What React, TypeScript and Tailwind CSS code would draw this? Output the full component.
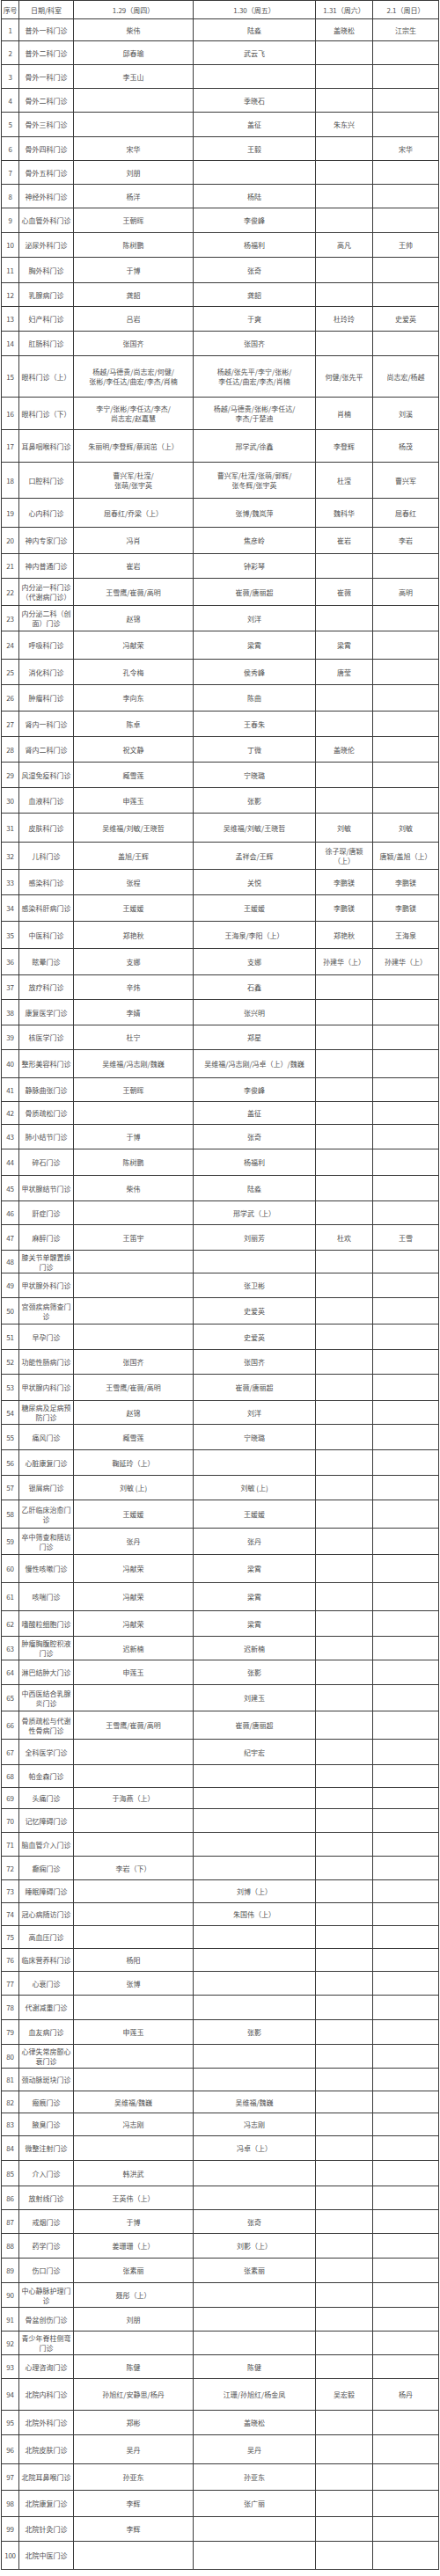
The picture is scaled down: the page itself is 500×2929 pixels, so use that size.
import React from "react";

type Row = [number, string, string, string, string, string, number];

const H: Record<number, string> = {
  22: "h-[22px]",
  24: "h-[24px]",
  25: "h-[25px]",
  26: "h-[26px]",
  27: "h-[27px]",
  28: "h-[28px]",
  29: "h-[29px]",
  30: "h-[30px]",
  31: "h-[31px]",
  32: "h-[32px]",
  33: "h-[33px]",
  36: "h-[36px]",
  37: "h-[37px]",
  41: "h-[41px]",
  47: "h-[47px]",
};

const rows: Row[] = [
  [1, "普外一科门诊", "柴伟", "陆淼", "盖晓松", "江宗生", 25],
  [2, "普外二科门诊", "邱春瑜", "武云飞", "", "", 27],
  [3, "骨外一科门诊", "李玉山", "", "", "", 27],
  [4, "骨外二科门诊", "", "季晓石", "", "", 27],
  [5, "骨外三科门诊", "", "盖征", "朱东兴", "", 28],
  [6, "骨外四科门诊", "宋华", "王毅", "", "宋华", 27],
  [7, "骨外五科门诊", "刘朋", "", "", "", 27],
  [8, "神经外科门诊", "杨洋", "杨陆", "", "", 27],
  [9, "心血管外科门诊", "王朝晖", "李俊峰", "", "", 28],
  [10, "泌尿外科门诊", "陈树鹏", "杨福利", "高凡", "王帅", 28],
  [11, "胸外科门诊", "于博", "张奇", "", "", 29],
  [12, "乳腺病门诊", "龚韶", "龚韶", "", "", 27],
  [13, "妇产科门诊", "吕岩", "于爽", "杜玲玲", "史爱英", 28],
  [14, "肛肠科门诊", "张国齐", "张国齐", "", "", 28],
  [15, "眼科门诊（上）", "杨越/马德贵/尚志宏/何健/\n张彬/李任达/曲宏/李杰/肖楠", "杨越/张先平/李宁/张彬/\n李任达/曲宏/李杰/肖楠", "何健/张先平", "尚志宏/杨越", 47],
  [16, "眼科门诊（下）", "李宁/张彬/李任达/李杰/\n尚志宏/赵嘉慧", "杨越/马德贵/张彬/李任达/\n李杰/于楚迪", "肖楠", "刘溪", 37],
  [17, "耳鼻咽喉科门诊", "朱丽明/李登辉/蔡润茁（上）", "邢学武/徐鑫", "李登辉", "杨茂", 37],
  [18, "口腔科门诊", "曹兴军/杜滢/\n张萌/张宇英", "曹兴军/杜滢/张萌/郭辉/\n张冬辉/张宇英", "杜滢", "曹兴军", 41],
  [19, "心内科门诊", "屈春红/乔梁（上）", "张博/魏岚萍", "魏科华", "屈春红", 33],
  [20, "神内专家门诊", "冯肖", "焦彦岭", "崔岩", "李岩", 30],
  [21, "神内普通门诊", "崔岩", "钟彩琴", "", "", 28],
  [22, "内分泌一科门诊\n（代谢病门诊）", "王雪鹰/崔薇/高明", "崔薇/唐丽超", "崔薇", "高明", 31],
  [23, "内分泌二科（创\n面）门诊", "赵锦", "刘洋", "", "", 29],
  [24, "呼吸科门诊", "冯献荣", "梁霄", "梁霄", "", 32],
  [25, "消化科门诊", "孔令梅", "侯秀峰", "唐莹", "", 29],
  [26, "肿瘤科门诊", "李向东", "陈曲", "", "", 30],
  [27, "肾内一科门诊", "陈卓", "王春朱", "", "", 29],
  [28, "肾内二科门诊", "祝文静", "丁微", "盖晓伦", "", 29],
  [29, "风湿免疫科门诊", "臧雪莲", "宁晓璐", "", "", 29],
  [30, "血液科门诊", "申莲玉", "张影", "", "", 29],
  [31, "皮肤科门诊", "吴维福/刘敏/王晓哲", "吴维福/刘敏/王晓哲", "刘敏", "刘敏", 33],
  [32, "儿科门诊", "盖旭/王辉", "孟祥会/王辉", "徐子琛/唐颖\n（上）", "唐颖/盖旭（上）", 31],
  [33, "感染科门诊", "张程", "关悦", "李鹏镁", "李鹏镁", 29],
  [34, "感染科肝病门诊", "王媛媛", "王媛媛", "李鹏镁", "李鹏镁", 30],
  [35, "中医科门诊", "郑艳秋", "王海泉/李阳（上）", "郑艳秋", "王海泉", 31],
  [36, "眩晕门诊", "支娜", "支娜", "孙建华（上）", "孙建华（上）", 30],
  [37, "放疗科门诊", "辛炜", "石鑫", "", "", 28],
  [38, "康复医学门诊", "李婧", "张兴明", "", "", 29],
  [39, "核医学门诊", "杜宁", "郑星", "", "", 28],
  [40, "整形美容科门诊", "吴维福/冯志刚/魏巍", "吴维福/冯志刚/冯卓（上）/魏巍", "", "", 32],
  [41, "静脉曲张门诊", "王朝晖", "李俊峰", "", "", 27],
  [42, "骨质疏松门诊", "", "盖征", "", "", 26],
  [43, "肺小结节门诊", "于博", "张奇", "", "", 28],
  [44, "碎石门诊", "陈树鹏", "杨福利", "", "", 30],
  [45, "甲状腺结节门诊", "柴伟", "陆淼", "", "", 29],
  [46, "鼾症门诊", "", "邢学武（上）", "", "", 27],
  [47, "麻醉门诊", "王笛宇", "刘丽芳", "杜欢", "王雪", 29],
  [48, "膝关节单髁置换\n门诊", "", "", "", "", 26],
  [49, "甲状腺外科门诊", "", "张卫彬", "", "", 28],
  [50, "宫颈疾病筛查门\n诊", "", "史爱英", "", "", 30],
  [51, "早孕门诊", "", "史爱英", "", "", 29],
  [52, "功能性肠病门诊", "张国齐", "张国齐", "", "", 28],
  [53, "甲状腺内科门诊", "王雪鹰/崔薇/高明", "崔薇/唐丽超", "", "", 30],
  [54, "糖尿病及足病预\n防门诊", "赵锦", "刘洋", "", "", 27],
  [55, "痛风门诊", "臧雪莲", "宁晓璐", "", "", 29],
  [56, "心脏康复门诊", "鞠延玲（上）", "", "", "", 29],
  [57, "银屑病门诊", "刘敏 (上)", "刘敏 (上)", "", "", 28],
  [58, "乙肝临床治愈门\n诊", "王媛媛", "王媛媛", "", "", 32],
  [59, "卒中筛查和随访\n门诊", "张丹", "张丹", "", "", 30],
  [60, "慢性咳嗽门诊", "冯献荣", "梁霄", "", "", 32],
  [61, "咳喘门诊", "冯献荣", "梁霄", "", "", 32],
  [62, "嗜酸粒细胞门诊", "冯献荣", "梁霄", "", "", 29],
  [63, "肿瘤胸腹腔积液\n门诊", "迟新楠", "迟新楠", "", "", 27],
  [64, "淋巴结肿大门诊", "申莲玉", "张影", "", "", 28],
  [65, "中西医结合乳腺\n炎门诊", "", "刘建玉", "", "", 30],
  [66, "骨质疏松与代谢\n性骨病门诊", "王雪鹰/崔薇/高明", "崔薇/唐丽超", "", "", 32],
  [67, "全科医学门诊", "", "纪宇宏", "", "", 29],
  [68, "帕金森门诊", "", "", "", "", 26],
  [69, "头痛门诊", "于海燕（上）", "", "", "", 24],
  [70, "记忆障碍门诊", "", "", "", "", 27],
  [71, "脑血管介入门诊", "", "", "", "", 27],
  [72, "癫痫门诊", "李岩（下）", "", "", "", 27],
  [73, "睡眠障碍门诊", "", "刘博（上）", "", "", 26],
  [74, "冠心病随访门诊", "", "朱国伟（上）", "", "", 26],
  [75, "高血压门诊", "", "", "", "", 26],
  [76, "临床营养科门诊", "杨阳", "", "", "", 26],
  [77, "心衰门诊", "张博", "", "", "", 27],
  [78, "代谢减重门诊", "", "", "", "", 28],
  [79, "血友病门诊", "申莲玉", "张影", "", "", 28],
  [80, "心律失常房颤心\n衰门诊", "", "", "", "", 27],
  [81, "颈动脉斑块门诊", "", "", "", "", 26],
  [82, "瘢痕门诊", "吴维福/魏巍", "吴维福/魏巍", "", "", 25],
  [83, "腋臭门诊", "冯志刚", "冯志刚", "", "", 26],
  [84, "微整注射门诊", "", "冯卓（上）", "", "", 28],
  [85, "介入门诊", "韩洪武", "", "", "", 29],
  [86, "放射线门诊", "王英伟（上）", "", "", "", 27],
  [87, "戒烟门诊", "于博", "张奇", "", "", 27],
  [88, "药学门诊", "姜珊珊（上）", "刘影（上）", "", "", 28],
  [89, "伤口门诊", "张素丽", "张素丽", "", "", 28],
  [90, "中心静脉护理门\n诊", "聂彤（上）", "", "", "", 28],
  [91, "骨盆创伤门诊", "刘朋", "", "", "", 27],
  [92, "青少年脊柱侧弯\n门诊", "", "", "", "", 27],
  [93, "心理咨询门诊", "陈健", "陈健", "", "", 27],
  [94, "北院内科门诊", "孙旭红/安静思/杨丹", "江珊/孙旭红/杨金凤", "吴宏毅", "杨丹", 36],
  [95, "北院外科门诊", "郑彬", "盖晓松", "", "", 28],
  [96, "北院皮肤门诊", "吴丹", "吴丹", "", "", 33],
  [97, "北院耳鼻喉门诊", "孙亚东", "孙亚东", "", "", 30],
  [98, "北院康复门诊", "李辉", "张广丽", "", "", 30],
  [99, "北院针灸门诊", "李辉", "", "", "", 28],
  [100, "北院中医门诊", "", "", "", "", 32],
];

const cols = ["w-[20px]", "w-[62px]", "w-[136px]", "w-[139px]", "w-[65px]", "w-[75px]"];

function Cell({ text, i }: { text: string; i: number }) {
  const lines = text.split("\n");
  return (
    <div
      className={`${cols[i]} shrink-0 border-r border-[#3a3a3a] flex flex-col items-center justify-center text-center leading-[11px] whitespace-nowrap overflow-hidden ${i === 0 ? "tracking-[-0.3px]" : ""}`}
    >
      {lines.map((l, k) => (
        <span key={k}>{l}</span>
      ))}
    </div>
  );
}

export default function App() {
  const header = ["序号", "日期/科室", "1.29（周四）", "1.30（周五）", "1.31（周六）", "2.1（周日）"];
  return (
    <div className="w-[500px] h-[2929px] bg-white">
      <div
        className="ml-px w-[498px] border-l border-t border-[#3a3a3a] text-[8px] text-[#505050]"
        style={{ fontFamily: '"Noto Sans CJK SC", "Noto Sans", sans-serif' }}
      >
        <div className={`flex ${H[21] ?? "h-[21px]"} border-b border-[#3a3a3a]`}>
          {header.map((t, i) => (
            <Cell key={i} text={t} i={i} />
          ))}
        </div>
        {rows.map((r) => (
          <div key={r[0]} className={`flex ${H[r[6]]} border-b border-[#3a3a3a]`}>
            <Cell text={String(r[0])} i={0} />
            <Cell text={r[1]} i={1} />
            <Cell text={r[2]} i={2} />
            <Cell text={r[3]} i={3} />
            <Cell text={r[4]} i={4} />
            <Cell text={r[5]} i={5} />
          </div>
        ))}
      </div>
    </div>
  );
}
